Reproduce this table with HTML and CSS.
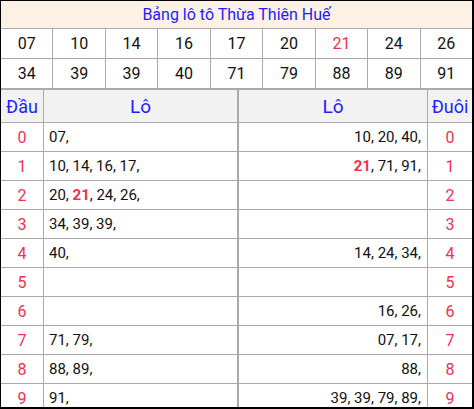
FILE: index.html
```html
<!DOCTYPE html>
<html lang="vi">
<head>
<meta charset="utf-8">
<title>Bảng lô tô Thừa Thiên Huế</title>
<link rel="stylesheet" href="styles.css">
</head>
<body>
<div class="board">
  <div class="prizes">
    <div class="title">Bảng lô tô Thừa Thiên Huế</div>
    <div class="num">07</div><div class="num">10</div><div class="num">14</div><div class="num">16</div><div class="num">17</div><div class="num">20</div><div class="num red">21</div><div class="num">24</div><div class="num">26</div>
    <div class="num">34</div><div class="num">39</div><div class="num">39</div><div class="num">40</div><div class="num">71</div><div class="num">79</div><div class="num">88</div><div class="num">89</div><div class="num">91</div>
  </div>
  <div class="split">
    <div class="panel left">
      <div class="head key">Đầu</div><div class="head">Lô</div>
      <div class="key">0</div><div class="lo">07,</div>
      <div class="key">1</div><div class="lo">10, 14, 16, 17,</div>
      <div class="key">2</div><div class="lo">20, <b>21</b>, 24, 26,</div>
      <div class="key">3</div><div class="lo">34, 39, 39,</div>
      <div class="key">4</div><div class="lo">40,</div>
      <div class="key">5</div><div class="lo"></div>
      <div class="key">6</div><div class="lo"></div>
      <div class="key">7</div><div class="lo">71, 79,</div>
      <div class="key">8</div><div class="lo">88, 89,</div>
      <div class="key">9</div><div class="lo">91,</div>
    </div>
    <div class="panel right">
      <div class="head">Lô</div><div class="head key">Đuôi</div>
      <div class="lo">10, 20, 40,</div><div class="key">0</div>
      <div class="lo"><b>21</b>, 71, 91,</div><div class="key">1</div>
      <div class="lo"></div><div class="key">2</div>
      <div class="lo"></div><div class="key">3</div>
      <div class="lo">14, 24, 34,</div><div class="key">4</div>
      <div class="lo"></div><div class="key">5</div>
      <div class="lo">16, 26,</div><div class="key">6</div>
      <div class="lo">07, 17,</div><div class="key">7</div>
      <div class="lo">88,</div><div class="key">8</div>
      <div class="lo">39, 39, 79, 89,</div><div class="key">9</div>
    </div>
  </div>
</div>
</body>
</html>
```
FILE: styles.css
```css
html, body {
  margin: 0;
  padding: 0;
  background: #fff;
}
body {
  font-family: Roboto, "Liberation Sans", Arial, sans-serif;
  color: #111;
}
.board {
  width: 474px;
  height: 409px;
  box-sizing: border-box;
  border-style: solid;
  border-color: #000;
  border-width: 1px 2px 2px 1px;
  overflow: hidden;
  background: #fff;
}
.prizes {
  display: grid;
  grid-template-columns: repeat(9, 1fr);
  grid-template-rows: 27px 29px 29px;
  gap: 1px;
  background: #aaa;
  border-bottom: 1px solid #aaa;
}
.prizes > div {
  background: #fff;
  display: flex;
  align-items: center;
  justify-content: center;
}
.prizes .title {
  grid-column: 1 / -1;
  background: #fdf1e6;
  color: #1f1fff;
  font-size: 16px;
}
.num {
  font-size: 16px;
  color: #111;
}
.red {
  color: #ee3344 !important;
}
.split {
  display: flex;
}
.panel {
  display: grid;
  grid-template-rows: 32px repeat(10, 28px);
  gap: 1px;
  background: #aaa;
  border-top: 1px solid #aaa;
}
.panel.left {
  width: 236px;
  grid-template-columns: 42px 1fr;
  border-right: 1px solid #aaa;
}
.panel.right {
  width: 233px;
  grid-template-columns: 1fr 44px;
  border-left: 1px solid #aaa;
}
.panel > div {
  background: #fff;
  display: flex;
  align-items: center;
  font-size: 15px;
}
.panel > .lo {
  display: block;
  line-height: 28px;
  white-space: nowrap;
}
.panel .head {
  background: #f2f2f2;
  color: #1f1fff;
  font-size: 19px;
  justify-content: center;
}
.panel .key {
  justify-content: center;
  color: #ee3350;
  font-size: 16px;
}
.panel .head.key {
  color: #1f1fff;
  font-size: 18px;
}
.left .lo {
  padding-left: 5px;
}
.right .lo {
  text-align: right;
  padding-right: 6px;
}
.lo b {
  color: #ee3344;
  font-weight: bold;
}
```
